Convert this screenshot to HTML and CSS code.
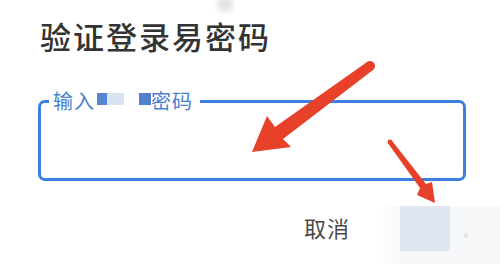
FILE: index.html
```html
<!DOCTYPE html>
<html lang="zh-CN">
<head>
    <meta charset="UTF-8">
    <meta name="viewport" content="width=device-width, initial-scale=1.0">
    <title>验证登录易密码</title>
    <link rel="stylesheet" href="styles.css">
</head>
<body>
    <div class="dialog">
        <h1 class="title">验证登录易密码</h1>

        <fieldset class="field">
            <legend class="field-label">输入<span class="blur blur-a"></span><span class="blur blur-b"></span><span class="blur-gap"></span><span class="blur blur-c"></span>密码</legend>
            <div class="field-input"></div>
        </fieldset>

        <div class="actions">
            <button class="btn btn-cancel">取消</button>
            <button class="btn btn-ok"><span class="ok-mask"></span><span class="ok-dot"></span></button>
        </div>
    </div>

    <!-- annotation arrows drawn over the screenshot -->
    <svg class="marks" width="500" height="266" viewBox="0 0 500 266">
        <defs>
            <filter id="soft"><feGaussianBlur stdDeviation="3"/></filter>
        </defs>
        <circle cx="225" cy="4" r="8" fill="#e2e2e2" filter="url(#soft)"/>
        <g fill="#e8412a">
            <circle cx="370" cy="66" r="5"/>
            <polygon points="252,152 267,116 275,127 367,62 373,70 283,139 291,147"/>
            <circle cx="390" cy="142" r="2.4"/>
            <polygon points="435,203 432,182 426,184 391.8,140.6 388.2,143.4 420,188 417,195"/>
        </g>
    </svg>
</body>
</html>
```

FILE: styles.css
```css
body {
    margin: 0;
    background-color: #fff;
    font-family: "Noto Sans CJK SC", "Noto Sans", sans-serif;
}

.dialog {
    width: 500px;
    height: 266px;
    padding: 0 34px 0 38px;
    box-sizing: border-box;
    overflow: hidden;
}

.title {
    margin: 16px 0 0 2px;
    font-size: 31px;
    font-weight: 500;
    line-height: 40px;
    letter-spacing: 2px;
    color: #333;
}

.field {
    margin: 33px 0 0 0;
    padding: 0 8px;
    border: 3px solid #3b80de;
    border-radius: 7px;
}

.field-label {
    padding: 0 7px 0 4px;
    font-size: 20px;
    line-height: 24px;
    letter-spacing: 1px;
    color: #4a7fcf;
    display: flex;
    align-items: center;
}

.blur {
    display: inline-block;
    height: 12px;
    margin-bottom: 4px;
}

.blur-a {
    width: 10px;
    margin-left: 2px;
    background-color: #5585cf;
}

.blur-b {
    width: 17px;
    background-color: #d7e3f1;
}

.blur-gap {
    display: inline-block;
    width: 15px;
}

.blur-c {
    width: 12px;
    background-color: #4f80cc;
}

.field-input {
    height: 65px;
}

.actions {
    display: flex;
    justify-content: flex-end;
    align-items: center;
    margin: 25px -34px 0 0;
}

.btn {
    border: none;
    background: none;
    padding: 0;
    font-family: inherit;
}

.btn-cancel {
    font-size: 22px;
    line-height: 30px;
    letter-spacing: 1px;
    color: #4a4a4a;
    margin: 0 25px 4px 0;
}

.btn-ok {
    position: relative;
    width: 125px;
    height: 58px;
    margin-bottom: -13px;
    background: linear-gradient(to right, #fff, #f7f8fa 20%, #f7f8fa);
    border-radius: 12px 0 0 0;
}

.ok-mask {
    position: absolute;
    left: 25px;
    top: 0;
    width: 50px;
    height: 45px;
    background-color: #e1e7f0;
}

.ok-dot {
    position: absolute;
    left: 89px;
    top: 27px;
    width: 4px;
    height: 5px;
    background-color: #e6e7ea;
}

.marks {
    position: absolute;
    left: 0;
    top: 0;
    pointer-events: none;
}
```
